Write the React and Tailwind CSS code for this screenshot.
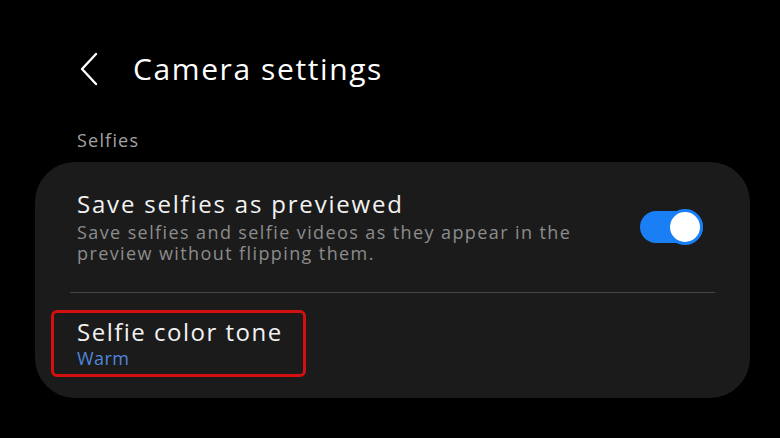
import React from 'react';

function Toggle({ on }) {
    return (
        <div className="relative w-[63px] h-[34px] flex items-center">
            <div className={`w-full h-[32px] rounded-full ${on ? 'bg-[#1a7ff5]' : 'bg-[#555]'}`}></div>
            <div className="absolute right-0 top-0 w-[36px] h-[36px] -mt-[1px] rounded-full bg-white border-[3px] border-[#1a7ff5]"></div>
        </div>
    );
}

export default function App() {
    return (
        <div className="w-[780px] h-[438px] bg-black text-white overflow-hidden font-normal" style={{ fontFamily: '"Open Sans", "Noto Sans", sans-serif' }}>
            {/* Header */}
            <div className="flex items-center h-[60px] mt-[39px] pl-[78px]">
                <svg width="22" height="34" viewBox="0 0 22 34" fill="none" stroke="white" strokeWidth="2.4" strokeLinecap="round" strokeLinejoin="round">
                    <path d="M18 2 L4 17 L18 32" />
                </svg>
                <h1 className="ml-[33px] text-[30px] leading-none tracking-[1.6px]">Camera settings</h1>
            </div>

            <div className="pl-[77px] mt-[32px] text-[18px] leading-none text-[#a3a3a3] tracking-[1.2px]">Selfies</div>

            {/* Card */}
            <div className="ml-[35px] mt-[13px] w-[715px] h-[236px] rounded-[40px] bg-[#1b1b1b] flex flex-col">
                <div className="flex items-center justify-between pl-[42px] pr-[47px] pt-[27px]">
                    <div className="flex flex-col">
                        <div className="text-[24px] leading-[30px] text-[#f2f2f2] tracking-[1.8px]">Save selfies as previewed</div>
                        <div className="text-[18px] leading-[21px] text-[#8c8c8c] tracking-[1.4px] w-[520px] mt-[3px]">
                            Save selfies and selfie videos as they appear in the preview without flipping them.
                        </div>
                    </div>
                    <Toggle on />
                </div>
                <div className="mx-[35px] mt-[28px] h-[1px] bg-[#464646]"></div>
                <div className="ml-[16px] mt-[17px] w-[255px] h-[67px] border-[3px] border-[#d40f0f] rounded-[6px] pl-[23px] pt-[4px]">
                    <div className="text-[24px] leading-[30px] text-[#f2f2f2] tracking-[1.5px]">Selfie color tone</div>
                    <div className="text-[18px] leading-[22px] text-[#4f86dc] tracking-[0.4px]">Warm</div>
                </div>
            </div>
        </div>
    );
}
